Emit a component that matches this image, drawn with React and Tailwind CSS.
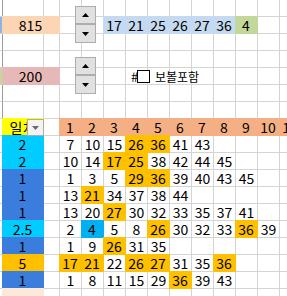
import React from "react";

const FILL = {
  none: "border-[#d4d4d4]",
  hd: "bg-[#f4b084] border-[#f4b084] -ml-px -mt-px",
  hi: "bg-[#ffc000] border-[#ffc000] -ml-px -mt-px",
  cy: "bg-[#00ccff] border-[#00ccff] -ml-px -mt-px",
  bl: "bg-[#3b7ddd] border-[#3b7ddd] -ml-px -mt-px",
  b4: "bg-[#00b0f0] border-[#00b0f0] -ml-px -mt-px",
  pe: "bg-[#fcd5b4] border-[#fcd5b4] -ml-px -mt-px",
  pk: "bg-[#e6b8b7] border-[#e6b8b7] -ml-px -mt-px",
  lb: "bg-[#c5d9f1] border-[#c5d9f1] -ml-px -mt-px",
  gr: "bg-[#c4d79b] border-[#c4d79b] -ml-px -mt-px",
  ye: "bg-[#ffff00] border-[#ffff00] -ml-px -mt-px",
  pl: "bg-[#fde9d9] border-[#fde9d9] -ml-px -mt-px",
  eb: "bg-[#8db4e2] border-b-[#d4d4d4] border-r-[#9c9c9c]",
  eg: "bg-[#c4d79b] border-b-[#d4d4d4] border-r-[#9c9c9c]",
  edge: "border-b-[#d4d4d4] border-r-[#9c9c9c]",
};

function Cell({ fill = "none", span = false, children }) {
  return (
    <div
      className={`border-r border-b flex items-center justify-center overflow-hidden whitespace-nowrap leading-[16px] ${FILL[fill]} ${span ? "col-span-2" : ""}`}
    >
      {children}
    </div>
  );
}

const blanks = (n, p) => Array.from({ length: n }, (_, i) => <Cell key={p + i} />);

const data = [
  { a: "2", f: "cy", n: [7, 10, 15, 26, 36, 41, 43], h: [3, 4] },
  { a: "2", f: "cy", n: [10, 14, 17, 25, 38, 42, 44, 45], h: [2, 3] },
  { a: "1", f: "bl", n: [1, 3, 5, 29, 36, 39, 40, 43, 45], h: [3, 4] },
  { a: "1", f: "bl", n: [13, 21, 34, 37, 38, 44], h: [1] },
  { a: "1", f: "bl", n: [13, 20, 27, 30, 32, 33, 35, 37, 41], h: [2] },
  { a: "2.5", f: "cy", n: [2, 4, 5, 8, 26, 30, 32, 33, 36, 39], h: [4, 8], b: [1] },
  { a: "1", f: "bl", n: [1, 9, 26, 31, 35], h: [2] },
  { a: "5", f: "hi", n: [17, 21, 22, 26, 27, 31, 35, 36], h: [0, 1, 3, 4, 7] },
  { a: "1", f: "bl", n: [1, 8, 11, 15, 29, 36, 39, 43], h: [5] },
];

function Spinner({ top }) {
  return (
    <div className="absolute left-[75px] w-[21px] flex flex-col" style={{ top }}>
      <div className="h-[18px] bg-[#e1e1e1] border border-[#adadad] flex items-center justify-center">
        <svg width="7" height="4" viewBox="0 0 7 4">
          <polygon points="0,4 7,4 3.5,0" fill="#000" />
        </svg>
      </div>
      <div className="h-[19px] bg-[#e1e1e1] border border-[#adadad] flex items-center justify-center">
        <svg width="7" height="4" viewBox="0 0 7 4">
          <polygon points="0,0 7,0 3.5,4" fill="#000" />
        </svg>
      </div>
    </div>
  );
}

export default function App() {
  const top = [17, 21, 25, 26, 27, 36];

  return (
    <div className="relative w-[287px] h-[296px] overflow-hidden bg-white text-black text-[14px] font-['Noto_Sans_CJK_KR',sans-serif]">
      <div className="grid grid-cols-[3px_41px_16px_repeat(11,22px)] auto-rows-[17px]">
        {/* row 0 */}
        <Cell fill="edge" />
        {blanks(13, "r0")}

        {/* 815 row */}
        <Cell fill="eb" />
        <Cell fill="pe" span>815</Cell>
        {blanks(2, "r1a")}
        {top.map((v) => (
          <Cell key={v} fill="lb">{v}</Cell>
        ))}
        <Cell fill="gr">4</Cell>
        {blanks(2, "r1b")}

        <Cell fill="edge" />
        {blanks(13, "r2")}
        <Cell fill="edge" />
        {blanks(13, "r3")}

        {/* 200 row */}
        <Cell fill="eg" />
        <Cell fill="pk" span>200</Cell>
        {blanks(11, "r4")}

        <Cell fill="edge" />
        {blanks(13, "r5")}
        <Cell fill="edge" />
        {blanks(13, "r6")}

        {/* header */}
        <Cell fill="edge" />
        <Cell fill="ye">일치</Cell>
        <Cell />
        {Array.from({ length: 11 }, (_, i) => (
          <Cell key={"h" + i} fill="hd">{i + 1}</Cell>
        ))}

        {data.map((r, ri) => (
          <React.Fragment key={"d" + ri}>
            <Cell />
            <Cell fill={r.f}>{r.a}</Cell>
            <Cell />
            {Array.from({ length: 11 }, (_, i) => {
              const v = r.n[i];
              let f = "none";
              if (r.h.includes(i)) f = "hi";
              if (r.b && r.b.includes(i)) f = "b4";
              return (
                <Cell key={i} fill={v === undefined ? "none" : f}>{v}</Cell>
              );
            })}
          </React.Fragment>
        ))}

        <Cell />
        <Cell fill="pl" />
        {blanks(12, "r17")}
      </div>

      <Spinner top={6} />
      <Spinner top={57} />

      {/* checkbox */}
      <div className="absolute left-[131px] top-[68px] h-[17px] flex items-center">
        <span className="text-[13px] leading-[16px] w-[6px] overflow-visible">#</span>
        <span className="w-[13px] h-[13px] border border-black bg-white" />
        <span className="ml-[5px] text-[12px] leading-[16px]">보볼포함</span>
      </div>

      {/* filter dropdown */}
      <div className="absolute left-[27px] top-[119px] w-[17px] h-[17px] bg-[#f3f3f3] border border-[#ababab] flex items-center justify-center">
        <svg width="7" height="4" viewBox="0 0 7 4">
          <polygon points="0,0 7,0 3.5,4" fill="#6a6a6a" />
        </svg>
      </div>
    </div>
  );
}
